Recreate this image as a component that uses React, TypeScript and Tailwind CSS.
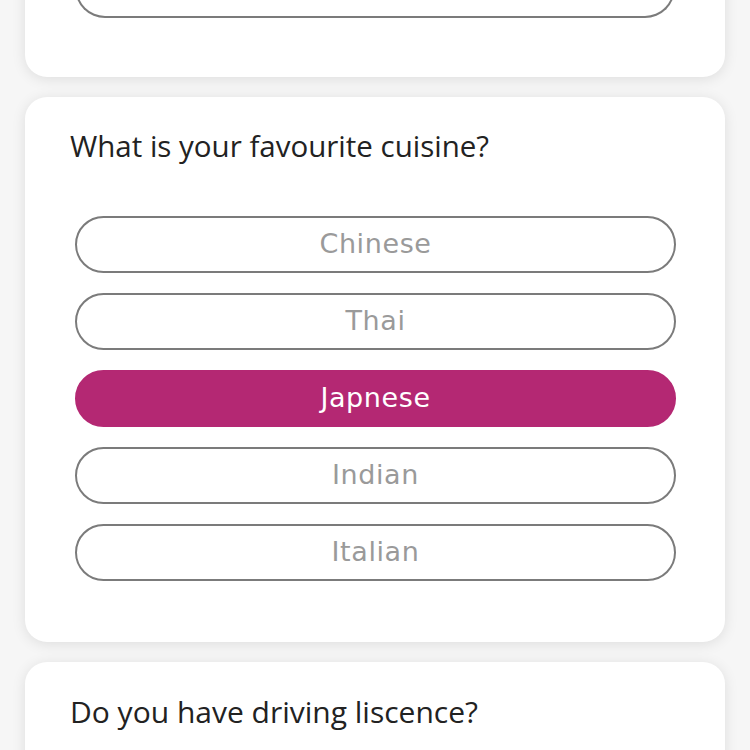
const options = ["Chinese", "Thai", "Japnese", "Indian", "Italian"];

function Option({ label, selected }: { label: string; selected?: boolean }) {
  return (
    <div
      className={
        selected
          ? "h-[57px] rounded-full bg-[#b42873] border-2 border-[#b42873] flex items-center justify-center text-white text-[27px] tracking-[0.6px]"
          : "h-[57px] rounded-full border-2 border-[#7b7b7b] flex items-center justify-center text-[#9a9a9a] text-[27px] tracking-[0.6px]"
      }
      style={{ fontFamily: '"DejaVu Sans", sans-serif' }}
    >
      {label}
    </div>
  );
}

export default function App() {
  return (
    <div className="w-[750px] h-[750px] overflow-hidden bg-[#f6f6f6]">
      <div className="-mt-[40px] flex flex-col gap-[20px] px-[25px]">
        <div className="bg-white rounded-[22px] shadow-[0_2px_14px_rgba(0,0,0,0.10)] px-[50px] pb-[59px]">
          <div className="h-[58px] rounded-b-[30px] border-2 border-t-0 border-[#7b7b7b]" />
        </div>

        <div className="bg-white rounded-[22px] shadow-[0_2px_14px_rgba(0,0,0,0.10)] pl-[45px] pr-[49px] pt-[30px] pb-[61px]">
          <h2
            className="text-[29.5px] leading-[37px] text-[#222]"
            style={{ fontFamily: '"Open Sans", sans-serif' }}
          >
            What is your favourite cuisine?
          </h2>
          <div className="mt-[52px] pl-[5px] flex flex-col gap-[20px]">
            {options.map((o) => (
              <Option key={o} label={o} selected={o === "Japnese"} />
            ))}
          </div>
        </div>

        <div className="bg-white rounded-[22px] shadow-[0_2px_14px_rgba(0,0,0,0.10)] pl-[45px] pt-[31px] h-[200px]">
          <h2
            className="text-[30px] leading-[37px] text-[#222]"
            style={{ fontFamily: '"Open Sans", sans-serif' }}
          >
            Do you have driving liscence?
          </h2>
        </div>
      </div>
    </div>
  );
}
